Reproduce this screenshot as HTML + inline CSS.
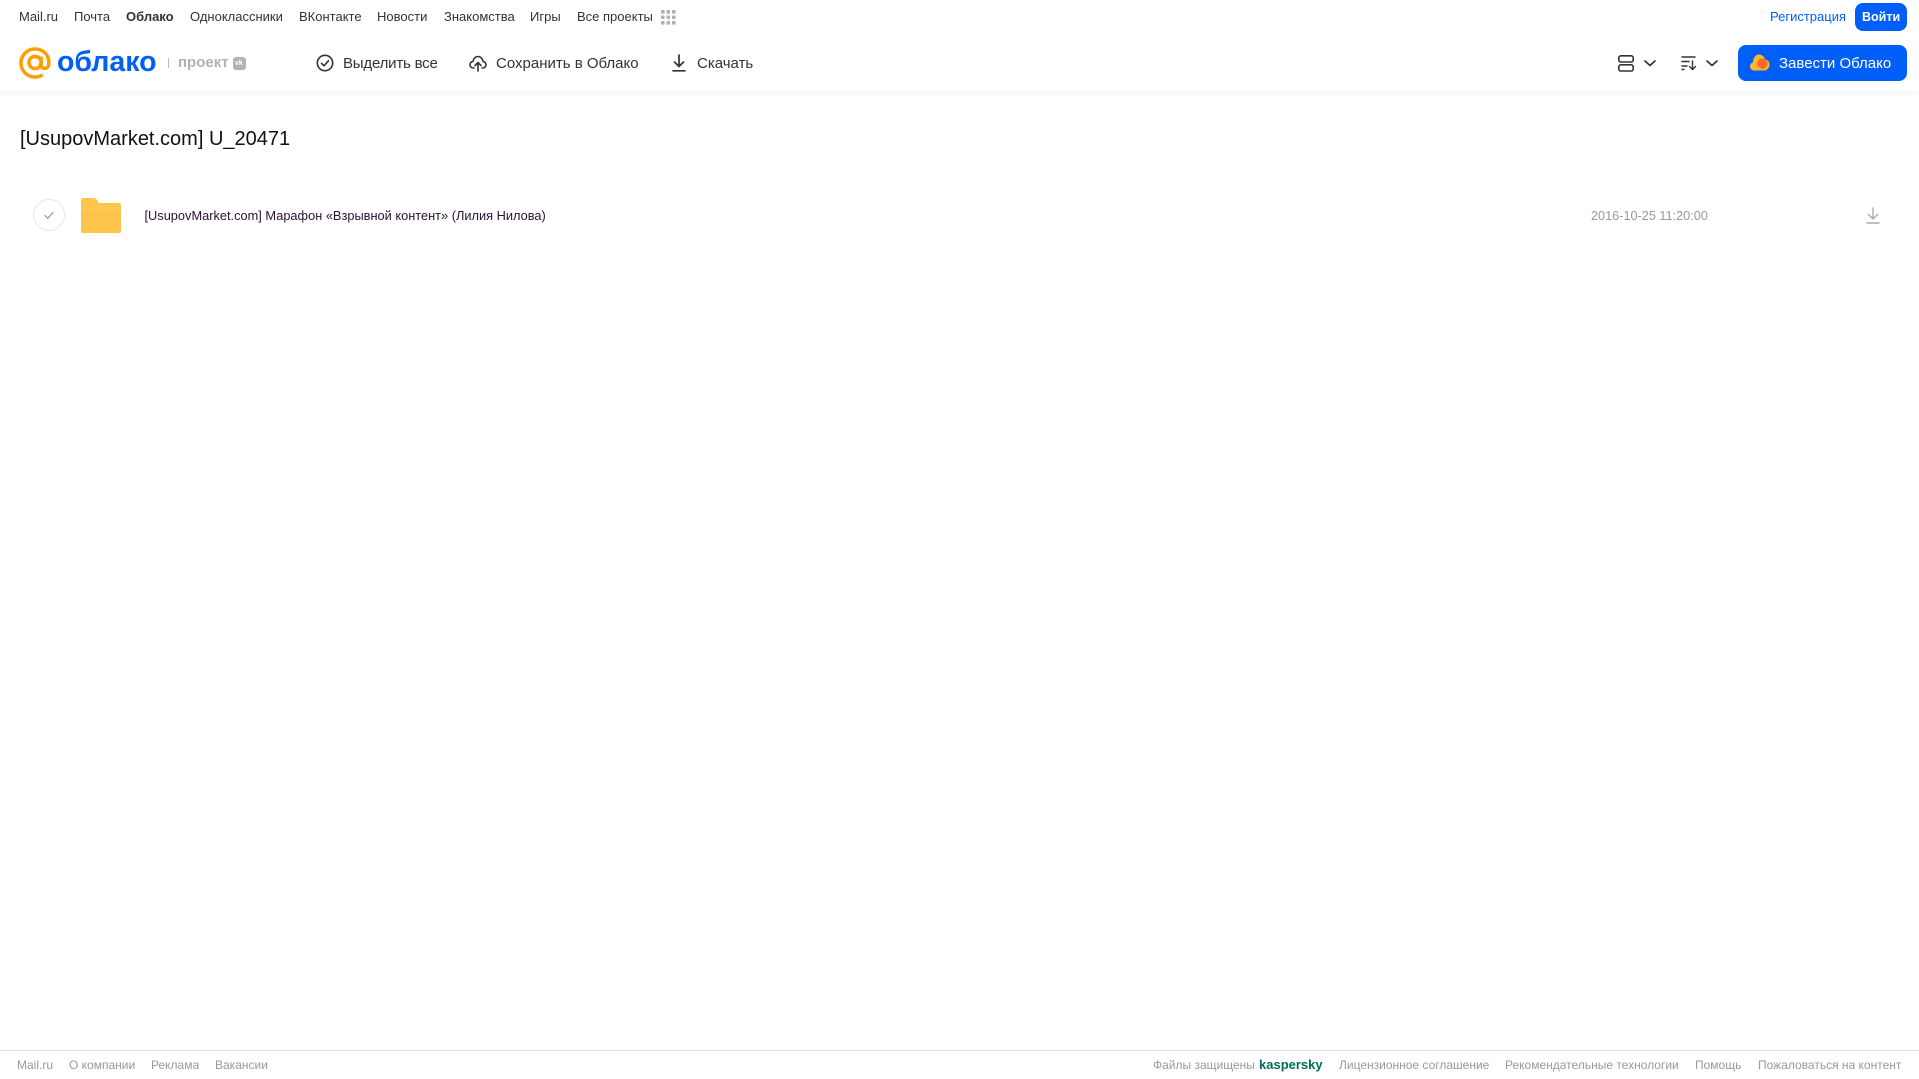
<!DOCTYPE html>
<html lang="ru"><head><meta charset="utf-8"><title>Облако</title>
<style>
html,body{margin:0;padding:0;background:#fff;width:1919px;height:1079px;overflow:hidden;font-family:"Liberation Sans",sans-serif}
span.t,a.t{position:absolute;white-space:nowrap;line-height:18px;text-decoration:none}
svg{position:absolute;overflow:visible}
.n{top:8px;font-size:13px;color:#333}
.b{top:55px;font-size:15px;color:#333}
.f{top:1056px;font-size:12px;color:#999}
#hdr{position:absolute;left:0;top:0;width:1919px;height:91px;background:#fff;box-shadow:0 2px 8px rgba(0,0,0,.06)}
#ft{position:absolute;left:0;top:1050px;width:1919px;height:1px;background:#ddd}
.btn{position:absolute;background:#005ff9;border-radius:8px}
</style></head><body>
<div id="hdr"></div>
<span class="t n" style="left:19px">Mail.ru</span>
<span class="t n" style="left:74px">Почта</span>
<span class="t n" style="left:126px;font-weight:bold">Облако</span>
<span class="t n" style="left:190px">Одноклассники</span>
<span class="t n" style="left:299px">ВКонтакте</span>
<span class="t n" style="left:377px">Новости</span>
<span class="t n" style="left:444px">Знакомства</span>
<span class="t n" style="left:530px">Игры</span>
<span class="t n" style="left:577px">Все проекты</span>
<svg style="left:661px;top:10px" width="15" height="15" fill="#b0b0b0"><rect x="0" y="0" width="3.6" height="3.6" rx="1"/><rect x="5.5" y="0" width="3.6" height="3.6" rx="1"/><rect x="11" y="0" width="3.6" height="3.6" rx="1"/><rect x="0" y="5.5" width="3.6" height="3.6" rx="1"/><rect x="5.5" y="5.5" width="3.6" height="3.6" rx="1"/><rect x="11" y="5.5" width="3.6" height="3.6" rx="1"/><rect x="0" y="11" width="3.6" height="3.6" rx="1"/><rect x="5.5" y="11" width="3.6" height="3.6" rx="1"/><rect x="11" y="11" width="3.6" height="3.6" rx="1"/></svg>
<span class="t n" style="left:1770px;color:#005ff9">Регистрация</span>
<div class="btn" style="left:1855px;top:3px;width:52px;height:28px"></div>
<span class="t n" style="left:1862px;color:#fff;font-weight:bold;font-size:12.5px">Войти</span>

<svg style="left:19px;top:47px" width="32" height="32" viewBox="0 0 33 33" fill="none" stroke="#ff9e00" stroke-width="3.6"><circle cx="16.5" cy="16" r="6.3"/><path d="M22.8 9.8V18.5c0 5 7.900 5 8-1.500C31.300 8 24.500 2 16.500 2 8.500 2 2 8.500 2 16.500S8.500 31 16.500 31c3 0 5.500-.8 7.800-2.300"/></svg>
<span class="t" style="left:57px;top:44px;font-size:28.500px;line-height:36px;font-weight:bold;color:#005ff9">облако</span>
<div style="position:absolute;left:168px;top:58px;width:1px;height:10px;background:#bbb"></div>
<span class="t" style="left:178px;top:54px;font-size:15px;font-weight:bold;color:#b2b2b2;letter-spacing:0">проект</span>
<div style="position:absolute;left:233px;top:57px;width:13px;height:13px;background:#b2b2b2;border-radius:3px"></div>
<span class="t" style="left:235px;top:55px;font-size:7px;font-weight:bold;color:#fff">vk</span>

<svg style="left:316px;top:54px" width="18" height="18" viewBox="0 0 18 18" fill="none" stroke="#333" stroke-width="1.600"><circle cx="9" cy="9" r="7.700"/><path d="M5.500 9.300l2.500 2.500 4.500-5" stroke-linecap="round" stroke-linejoin="round"/></svg>
<span class="t b" style="left:343px;letter-spacing:-.2px">Выделить все</span>
<svg style="left:469px;top:54px" width="18" height="18" viewBox="0 0 18 18" fill="none" stroke="#333" stroke-width="1.600" stroke-linecap="round" stroke-linejoin="round"><path d="M5 14H4.500C2.500 14 1 12.500 1 10.700c0-1.700 1.300-3.200 3-3.300C4.500 4.500 6.500 2.500 9 2.500s4.500 2 5 4.900c1.700.1 3 1.600 3 3.300 0 1.800-1.500 3.300-3.500 3.300H13"/><path d="M9 17V9M6 11.500L9 8.500l3 3"/></svg>
<span class="t b" style="left:496px">Сохранить в Облако</span>
<svg style="left:672px;top:54px" width="14" height="18" viewBox="0 0 14 18" fill="none" stroke="#333" stroke-width="1.700" stroke-linecap="round" stroke-linejoin="round"><path d="M7 1v11M2.500 8L7 12.500 11.500 8M1 16.800h12"/></svg>
<span class="t b" style="left:697px">Скачать</span>

<svg style="left:1618px;top:55px" width="16" height="17" viewBox="0 0 16 17" fill="none" stroke="#333" stroke-width="1.600"><rect x=".8" y=".8" width="14.400" height="6.200" rx="2"/><rect x=".8" y="9.800" width="14.400" height="6.200" rx="2"/></svg>
<svg style="left:1644px;top:60px" width="12" height="7" viewBox="0 0 12 7" fill="none" stroke="#333" stroke-width="1.700" stroke-linecap="round" stroke-linejoin="round"><path d="M1 1l5 4.500L11 1"/></svg>
<svg style="left:1681px;top:56px" width="16" height="14" viewBox="0 0 16 14" fill="none" stroke="#333" stroke-width="1.400" stroke-linecap="round" stroke-linejoin="round"><path d="M1 1h13M1 5.500h7M1 10h5M1 13.500h2M11.500 5v8M8.500 10.500l3 3 3-3"/></svg>
<svg style="left:1706px;top:60px" width="12" height="7" viewBox="0 0 12 7" fill="none" stroke="#333" stroke-width="1.700" stroke-linecap="round" stroke-linejoin="round"><path d="M1 1l5 4.500L11 1"/></svg>

<div class="btn" style="left:1738px;top:45px;width:169px;height:36px"></div>
<svg style="left:1750px;top:54px" width="20" height="17" viewBox="0 0 20 17"><path d="M4 16.500C1.800 16.500 0 14.700 0 12.400 0 10.400 1.300 8.800 3 8.400 3.200 4 5.500 0.500 9 .5c3 0 5.200 2 6 4.700 2.600.4 4.500 2.500 4.500 5.400 0 3.300-2.500 5.900-5.500 5.900z" fill="#ffb52e"/><circle cx="12.300" cy="9.500" r="5.200" fill="#ff6a2b"/></svg>
<span class="t b" style="left:1779px;color:#fff">Завести Облако</span>

<span class="t" style="left:20px;top:126px;font-size:20px;line-height:26px;color:#111">[UsupovMarket.com] U_20471</span>

<svg style="left:33px;top:199px" width="32" height="32" viewBox="0 0 32 32" fill="none"><circle cx="16" cy="16" r="15.500" stroke="#e8e8e8"/><path d="M12 16.500l2.800 2.800 5.200-5.800" stroke="#999" stroke-width="1.300" stroke-linecap="round" stroke-linejoin="round"/></svg>
<svg style="left:81px;top:198px" width="40" height="35" viewBox="0 0 40 35"><path d="M2 0h10c2 0 3 .7 4 2l2 3h20c1.100 0 2 .9 2 2v26c0 1.100-.9 2-2 2H2c-1.100 0-2-.9-2-2V2C0 .9.900 0 2 0z" fill="#ffc54a"/><path d="M0 9h40v2.500H0z" fill="#ffd36e" opacity=".35"/></svg>
<span class="t" style="left:144.500px;top:207px;font-size:12.800px;color:#2b1030">[UsupovMarket.com] Марафон «Взрывной контент» (Лилия Нилова)</span>
<span class="t" style="left:1591px;top:207px;font-size:12.700px;color:#999">2016-10-25 11:20:00</span>
<svg style="left:1866px;top:207px" width="14" height="17" viewBox="0 0 14 17" fill="none" stroke="#aaa" stroke-width="1.400" stroke-linecap="round" stroke-linejoin="round"><path d="M7 1v10.500M2.500 7.500L7 12l4.500-4.500M1 16h12"/></svg>

<div id="ft"></div>
<span class="t f" style="left:17px">Mail.ru</span>
<span class="t f" style="left:69px">О компании</span>
<span class="t f" style="left:151px">Реклама</span>
<span class="t f" style="left:215px">Вакансии</span>
<span class="t f" style="left:1153px">Файлы защищены</span>
<span class="t f" style="left:1259px;color:#006d5c;font-weight:bold;font-size:13px">kaspersky</span>
<span class="t f" style="left:1339px">Лицензионное соглашение</span>
<span class="t f" style="left:1505px">Рекомендательные технологии</span>
<span class="t f" style="left:1695px">Помощь</span>
<span class="t f" style="left:1758px">Пожаловаться на контент</span>
</body></html>
